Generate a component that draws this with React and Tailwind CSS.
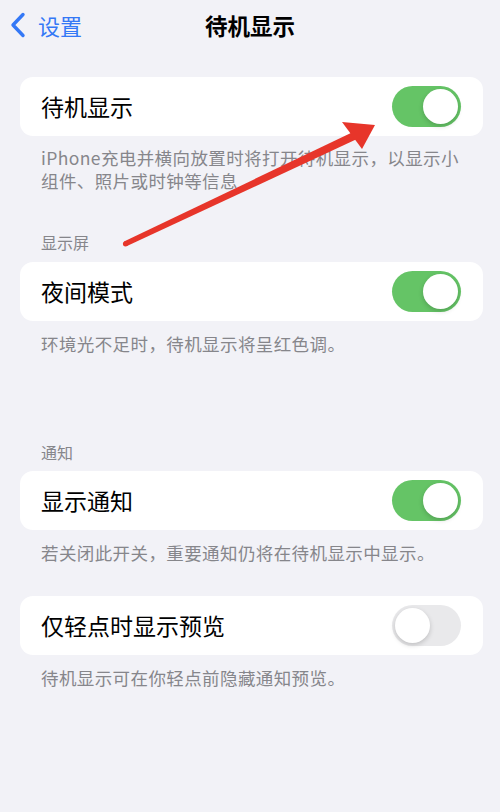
import React from "react";

const font = { fontFamily: '"Noto Sans CJK SC", "Noto Sans", sans-serif' };

function Toggle({ on }) {
  return (
    <div
      className={`w-[69px] h-[41px] rounded-full p-[3px] flex items-center ${
        on ? "bg-[#65c466] justify-end" : "bg-[#e9e9eb] justify-start"
      }`}
    >
      <div className="w-[35px] h-[35px] rounded-full bg-white shadow-[0_2px_5px_rgba(0,0,0,0.18)]" />
    </div>
  );
}

function Card({ label, on }) {
  return (
    <div className="h-[59px] rounded-[13px] bg-white pl-[21px] pr-[22px] flex items-center justify-between">
      <span className="text-[23px] text-black leading-none">{label}</span>
      <Toggle on={on} />
    </div>
  );
}

function Footer({ children, className = "" }) {
  return (
    <div className={`px-[21px] text-[17.5px] leading-[23px] tracking-[0.4px] text-[#86868b] ${className}`}>
      {children}
    </div>
  );
}

function Header({ children, className = "" }) {
  return (
    <div className={`px-[21px] text-[16px] leading-[22px] text-[#86868b] ${className}`}>{children}</div>
  );
}

export default function App() {
  return (
    <div className="relative w-[500px] h-[812px] bg-[#f2f2f7] overflow-hidden" style={font}>
      {/* navigation bar */}
      <div className="h-[50px] grid grid-cols-[1fr_auto_1fr] items-center">
        <div className="flex items-center pl-[10px] gap-[12px] text-[#3478f6]">
          <svg width="16" height="26" viewBox="0 0 16 26" fill="none">
            <path d="M13 2.5 L3 13 L13 23.5" stroke="#3478f6" strokeWidth="3.4" strokeLinecap="round" strokeLinejoin="round" />
          </svg>
          <span className="text-[22px] leading-none">设置</span>
        </div>
        <div className="text-[22.5px] font-bold leading-none text-black">待机显示</div>
        <div />
      </div>

      <div className="pl-[20px] pr-[17px] flex flex-col">
        <div className="mt-[27px]">
          <Card label="待机显示" on />
        </div>
        <Footer className="mt-[10px]">
          iPhone充电并横向放置时将打开待机显示，以显示小
          <br />
          组件、照片或时钟等信息
        </Footer>

        <Header className="mt-[39px]">显示屏</Header>
        <div className="mt-[9px]">
          <Card label="夜间模式" on />
        </div>
        <Footer className="mt-[11px]">环境光不足时，待机显示将呈红色调。</Footer>

        <Header className="mt-[86px]">通知</Header>
        <div className="mt-[8px]">
          <Card label="显示通知" on />
        </div>
        <Footer className="mt-[11px]">若关闭此开关，重要通知仍将在待机显示中显示。</Footer>

        <div className="mt-[32px]">
          <Card label="仅轻点时显示预览" on={false} />
        </div>
        <Footer className="mt-[11px]">待机显示可在你轻点前隐藏通知预览。</Footer>
      </div>

      {/* red annotation arrow */}
      <svg className="absolute inset-0 pointer-events-none" width="500" height="812" viewBox="0 0 500 812">
        <path d="M124 241.5 L353 132 L357 139 L127 246 Z" fill="#e7352a" />
        <circle cx="125.5" cy="243.8" r="2.6" fill="#e7352a" />
        <path d="M342 122 L375 125 L362 149 Z" fill="#e7352a" />
      </svg>
    </div>
  );
}
